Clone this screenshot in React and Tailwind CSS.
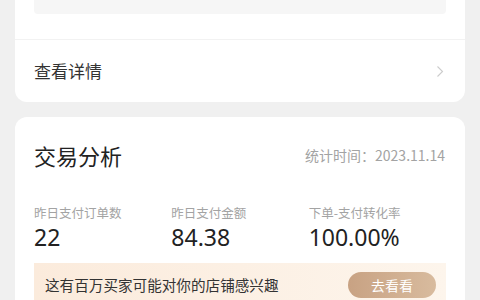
import React from "react";

const font = { fontFamily: '"Noto Sans CJK SC", "Noto Sans", sans-serif' };

function DetailCard() {
  return (
    <div className="bg-white rounded-b-[12px]">
      <div className="mx-[19px] h-[14px] bg-[#f6f6f6] rounded-b-[4px]" />
      <div className="h-[25px]" />
      <div className="border-t border-[#f2f2f2] h-[63px] flex items-center justify-between pl-[19px] pr-[21px]">
        <span className="text-[17px] text-[#333]">查看详情</span>
        <svg width="8" height="13" viewBox="0 0 8 13" fill="none">
          <path d="M1.5 1.5 L6.5 6.5 L1.5 11.5" stroke="#cccccc" strokeWidth="1.1" />
        </svg>
      </div>
    </div>
  );
}

function Stat({ label, value }) {
  return (
    <div>
      <div className="text-[12.5px] leading-[16px] text-[#a3a3a3]">{label}</div>
      <div className="mt-[3px] text-[23px] leading-[26px] text-[#222]" style={{ fontFamily: '"Noto Sans", sans-serif' }}>
        {value}
      </div>
    </div>
  );
}

function TradeCard() {
  return (
    <div className="mt-[15px] bg-white rounded-[12px] px-[19px] pt-[24px] pb-[20px]">
      <div className="flex items-center justify-between">
        <span className="text-[22px] leading-[28px] text-[#222]">交易分析</span>
        <span className="text-[14px] text-[#a3a3a3] pr-[1px]">统计时间：2023.11.14</span>
      </div>
      <div className="mt-[36px] grid grid-cols-3">
        <Stat label="昨日支付订单数" value="22" />
        <Stat label="昨日支付金额" value="84.38" />
        <Stat label="下单-支付转化率" value="100.00%" />
      </div>
      <div className="mt-[13px] h-[44px] bg-gradient-to-r from-[#fbebdc] to-[#fdf5ec] flex items-start justify-between pl-[11px] pr-[10px] pt-[9px]">
        <span className="text-[14.6px] leading-[26px] text-[#333]">这有百万买家可能对你的店铺感兴趣</span>
        <span className="w-[88px] h-[26px] rounded-full bg-gradient-to-r from-[#c8a283] to-[#d8bb9e] text-white text-[14px] leading-[26px] text-center">
          去看看
        </span>
      </div>
    </div>
  );
}

export default function App() {
  return (
    <div className="w-[480px] h-[300px] overflow-hidden bg-[#f0f0f0] px-[15px]" style={font}>
      <DetailCard />
      <TradeCard />
    </div>
  );
}
